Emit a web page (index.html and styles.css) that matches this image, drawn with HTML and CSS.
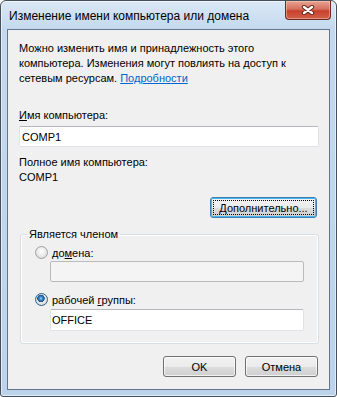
FILE: index.html
```html
<!DOCTYPE html>
<html lang="ru">
<head>
  <meta charset="UTF-8">
  <title>Изменение имени компьютера или домена</title>
  <link rel="stylesheet" href="styles.css">
</head>
<body>
  <div class="window">
    <div class="titlebar">
      <span class="title">Изменение имени компьютера или домена</span>
      <button class="close" type="button" aria-label="Закрыть">
        <svg width="14" height="10" viewBox="0 0 14 10">
          <path d="M3 2 L11 8 M11 2 L3 8" stroke="#5a2318" stroke-width="4.2" stroke-linecap="round" fill="none"/>
          <path d="M3 2 L11 8 M11 2 L3 8" stroke="#fff" stroke-width="2.4" stroke-linecap="round" fill="none"/>
        </svg>
      </button>
    </div>

    <form class="client">
      <p class="intro">Можно изменить имя и принадлежность этого<br>компьютера. Изменения могут повлиять на доступ к<br>сетевым ресурсам. <a href="#">Подробности</a></p>

      <label class="caption" for="compName"><u>И</u>мя компьютера:</label>
      <input class="textbox" id="compName" value="COMP1">

      <div class="caption full-name">Полное имя компьютера:</div>
      <div class="caption">COMP1</div>

      <div class="more-row">
        <button type="button" class="btn btn-focus"><u>Д</u>ополнительно...</button>
      </div>

      <fieldset class="member">
        <legend>Является членом</legend>
        <div class="member-body">
          <label class="radio-row">
            <input type="radio" name="member" class="radio">
            <span>до<u>м</u>ена:</span>
          </label>
          <input class="textbox sub-box" disabled>

          <label class="radio-row second">
            <input type="radio" name="member" class="radio" checked>
            <span>рабочей <u>г</u>руппы:</span>
          </label>
          <input class="textbox sub-box office" value="OFFICE">
        </div>
      </fieldset>

      <div class="actions">
        <button type="submit" class="btn">OK</button>
        <button type="button" class="btn">Отмена</button>
      </div>
    </form>
  </div>
</body>
</html>
```

FILE: styles.css
```css
html, body { margin: 0; padding: 0; background: #fff; }
body { font-family: "Liberation Sans", Arial, sans-serif; font-size: 11px; color: #000; }

.window {
  width: 337px;
  height: 397px;
  box-sizing: border-box;
  display: flex;
  flex-direction: column;
  border: 1px solid #46505c;
  border-radius: 6px 6px 3px 3px;
  background: linear-gradient(to bottom, #dbe8f6 0, #c4d9ee 28px, #bcd3eb 100%);
  box-shadow: inset 0 0 0 1px rgba(255,255,255,0.55);
  padding: 0 6px 6px 6px;
}

.titlebar {
  height: 28px;
  display: flex;
  align-items: flex-start;
  justify-content: space-between;
}
.title {
  font-size: 12px;
  line-height: 14px;
  margin: 8px 0 0 2px;
  color: #000;
  white-space: nowrap;
}
.close {
  width: 46px;
  height: 19px;
  margin: 0 -1px 0 0;
  padding: 0;
  display: flex;
  align-items: center;
  justify-content: center;
  border: 1px solid #6d2c22;
  border-top: none;
  border-radius: 0 0 4px 4px;
  background: linear-gradient(to bottom, #e8a493 0, #d5705f 45%, #c6412c 55%, #d2614b 100%);
  box-shadow: inset 0 0 0 1px rgba(255,210,200,0.45);
}

.client {
  flex: 1;
  margin: 0;
  display: flex;
  flex-direction: column;
  background: #f0f0f0;
  border: 1px solid #62778f;
  padding: 11px 10px 0 11px;
}

.intro {
  margin: 0 0 22px 0;
  line-height: 15px;
  white-space: nowrap;
}
.intro a { color: #0066cc; }

.caption { display: block; line-height: 15px; white-space: nowrap; }
.full-name { margin-top: 8px; }

.textbox {
  box-sizing: border-box;
  width: 300px;
  height: 21px;
  margin: 3px 0 0 0;
  padding: 0 2px;
  font: inherit;
  color: #000;
  background: #fff;
  border: 1px solid #dfe3e8;
  border-top-color: #b4b8bd;
  border-radius: 2px;
  outline: none;
}
.textbox:disabled {
  background: #f4f4f4;
  border-color: #b9bcbf;
}

.more-row {
  display: flex;
  justify-content: flex-end;
  margin-top: 12px;
  padding-right: 2px;
}

.btn {
  box-sizing: border-box;
  width: 73px;
  height: 21px;
  padding: 0;
  font: inherit;
  color: #000;
  border: 1px solid #707070;
  border-radius: 3px;
  background: linear-gradient(to bottom, #f2f2f2 0, #ebebeb 50%, #dddddd 50%, #cfcfcf 100%);
  box-shadow: inset 0 0 0 1px rgba(255,255,255,0.7);
}
.btn-focus {
  width: 107px;
  border-color: #3c7fb1;
  box-shadow: inset 0 0 0 1px #48b5ee;
  outline: 1px dotted #000;
  outline-offset: -4px;
}

.member {
  margin: 9px 0 0 1px;
  padding: 0 14px 12px 6px;
  min-width: 0;
  border: 1px solid #d5dfe5;
  border-radius: 3px;
  box-shadow: inset 0 0 0 1px #fff;
}
.member legend {
  padding: 0 2px;
  line-height: 15px;
}
.member-body {
  display: flex;
  flex-direction: column;
  padding-left: 8px;
}

.radio-row {
  display: flex;
  align-items: center;
  gap: 4px;
  height: 15px;
  margin-top: 3px;
}
.radio-row.second { margin-top: 10px; }

.radio {
  appearance: none;
  -webkit-appearance: none;
  width: 13px;
  height: 13px;
  margin: 0;
  border-radius: 50%;
  border: 1px solid #a0a0a0;
  background: radial-gradient(circle at 50% 40%, #ffffff 0, #ececec 45%, #d4d4d4 100%);
}
.radio:checked {
  border-color: #2c628b;
  background:
    radial-gradient(circle at 45% 40%, #9fdcff 0, #3a8fd0 1.5px, #1d5186 3.5px, transparent 4px),
    radial-gradient(circle at 50% 40%, #ffffff 0, #e2e2e2 60%, #c8c8c8 100%);
}

.sub-box {
  width: 254px;
  margin: 1px 0 0 15px;
}
.sub-box.office { height: 22px; margin-top: 2px; padding: 0 1px; }

.actions {
  display: flex;
  justify-content: flex-end;
  gap: 9px;
  margin-top: 12px;
  padding-right: 1px;
}
```
